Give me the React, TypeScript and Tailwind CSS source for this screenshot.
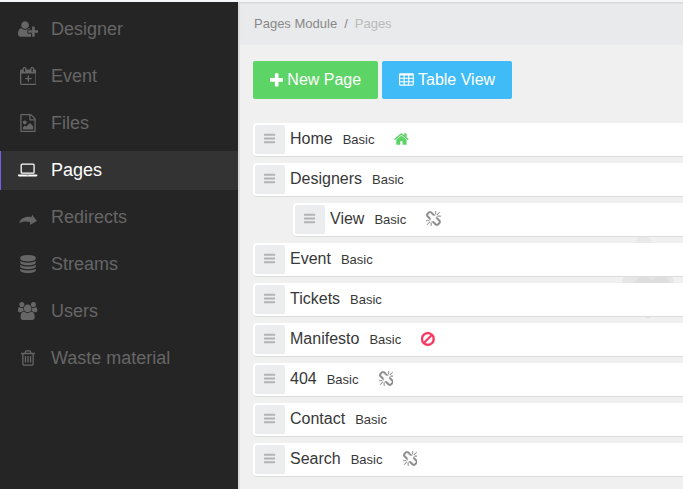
import React from 'react';

const glyphs = {
  userPlus: { w: 2048, d: 'M704 896q-159 0-271.5-112.5t-112.5-271.5 112.5-271.5 271.5-112.5 271.5 112.5 112.5 271.5-112.5 271.5-271.5 112.5zm960 128h352q13 0 22.5 9.5t9.5 22.5v192q0 13-9.5 22.5t-22.5 9.5h-352v352q0 13-9.5 22.5t-22.5 9.5h-192q-13 0-22.5-9.5t-9.5-22.5v-352h-352q-13 0-22.5-9.5t-9.5-22.5v-192q0-13 9.5-22.5t22.5-9.5h352v-352q0-13 9.5-22.5t22.5-9.5h192q13 0 22.5 9.5t9.5 22.5v352zm-736 224q0 52 38 90t90 38h256v238q-68 50-171 50h-874q-121 0-194-69t-73-190q0-53 3.5-103.5t14-109 26.5-108.5 43-97.5 62-81 85.5-53.5 111.5-20q19 0 39 17 79 61 154.5 91.5t164.5 30.5 164.5-30.5 154.5-91.5q20-17 39-17 132 0 217 96h-223q-52 0-90 38t-38 90v192z' },
  calendar: { w: 1664, d: 'M1536 256q52 0 90 38t38 90v1280q0 52-38 90t-90 38h-1408q-52 0-90-38t-38-90v-1280q0-52 38-90t90-38h128v-96q0-66 47-113t113-47h64q66 0 113 47t47 113v96h384v-96q0-66 47-113t113-47h64q66 0 113 47t47 113v96h128zm-384-96v288q0 14 9 23t23 9h64q14 0 23-9t9-23v-288q0-14-9-23t-23-9h-64q-14 0-23 9t-9 23zm-768 0v288q0 14 9 23t23 9h64q14 0 23-9t9-23v-288q0-14-9-23t-23-9h-64q-14 0-23 9t-9 23zm1152 1504v-1024h-1408v1024h1408zm-640-576h224q14 0 23 9t9 23v64q0 14-9 23t-23 9h-224v224q0 14-9 23t-23 9h-64q-14 0-23-9t-9-23v-224h-224q-14 0-23-9t-9-23v-64q0-14 9-23t23-9h224v-224q0-14 9-23t23-9h64q14 0 23 9t9 23v224z' },
  fileImage: { w: 1792, d: 'M1596 380q28 28 48 76t20 88v1152q0 40-28 68t-68 28h-1344q-40 0-68-28t-28-68v-1600q0-40 28-68t68-28h896q40 0 88 20t76 48zm-444-244v376h376q-10-29-22-41l-313-313q-12-12-41-22zm384 1528v-1024h-416q-40 0-68-28t-28-68v-416h-768v1536h1280zm-128-448v320h-1024v-192l192-192 128 128 384-384zm-832-192q-80 0-136-56t-56-136 56-136 136-56 136 56 56 136-56 136-136 56z' },
  laptop: { w: 1920, d: 'M416 1280q-66 0-113-47t-47-113v-704q0-66 47-113t113-47h1088q66 0 113 47t47 113v704q0 66-47 113t-113 47h-1088zm-32-864v704q0 13 9.500 22.500t22.500 9.500h1088q13 0 22.500-9.500t9.500-22.500v-704q0-13-9.500-22.500t-22.500-9.500h-1088q-13 0-22.500 9.500t-9.500 22.500zm1376 928h160v96q0 40-47 68t-113 28h-1600q-66 0-113-28t-47-68v-96h1760zm-720 96q16 0 16-16t-16-16h-160q-16 0-16 16t16 16h160z' },
  redirect: { w: 1792, d: 'M1300 680L1790 1290L1080 1700L1120 1400C700 1290 330 1320 20 1500C150 1000 700 800 1240 910Z' },
  database: { w: 1792, d: 'M896 768q237 0 443-43t325-127v170q0 69-103 128t-280 93.5-385 34.5-385-34.5-280-93.5-103-128v-170q119 84 325 127t443 43zm0 768q237 0 443-43t325-127v170q0 69-103 128t-280 93.5-385 34.5-385-34.5-280-93.5-103-128v-170q119 84 325 127t443 43zm0-384q237 0 443-43t325-127v170q0 69-103 128t-280 93.5-385 34.5-385-34.5-280-93.5-103-128v-170q119 84 325 127t443 43zm0-1152q208 0 385 34.5t280 93.5 103 128v128q0 69-103 128t-280 93.5-385 34.5-385-34.5-280-93.5-103-128v-128q0-69 103-128t280-93.5 385-34.5z' },
  users: { x: -64, w: 1920, d: 'M529 896q-162 5-265 128h-134q-82 0-138-40.5t-56-118.5q0-353 124-353 6 0 43.5 21t97.5 42.5 119 21.500q67 0 133-23-5 37-5 66 0 139 81 256zm1071 637q0 120-73 189.500t-194 69.500h-874q-121 0-194-69.500t-73-189.500q0-53 3.500-103.500t14-109 26.500-108.500 43-97.500 62-81 85.500-53.500 111.500-20q10 0 43 21.500t73 48 107 48 135 21.500 135-21.500 107-48 73-48 43-21.500q61 0 111.500 20t85.500 53.500 62 81 43 97.500 26.500 108.500 14 109 3.500 103.500zm-1024-1277q0 106-75 181t-181 75-181-75-75-181 75-181 181-75 181 75 75 181zm704 384q0 159-112.500 271.500t-271.500 112.500-271.500-112.500-112.500-271.500 112.500-271.500 271.500-112.500 271.500 112.500 112.500 271.500zm576 225q0 78-56 118.500t-138 40.500h-134q-103-123-265-128 81-117 81-256 0-29-5-66 66 23 133 23 59 0 119-21.500t97.500-42.500 43.500-21q124 0 124 353zm-128-609q0 106-75 181t-181 75-181-75-75-181 75-181 181-75 181 75 75 181z' },
  trash: { w: 1792, d: 'M704 736v576q0 14-9 23t-23 9h-64q-14 0-23-9t-9-23v-576q0-14 9-23t23-9h64q14 0 23 9t9 23zm256 0v576q0 14-9 23t-23 9h-64q-14 0-23-9t-9-23v-576q0-14 9-23t23-9h64q14 0 23 9t9 23zm256 0v576q0 14-9 23t-23 9h-64q-14 0-23-9t-9-23v-576q0-14 9-23t23-9h64q14 0 23 9t9 23zm128 724v-948h-896v948q0 22 7 40.5t14.5 27 10.5 8.5h832q3 0 10.5-8.5t14.5-27 7-40.5zm-672-1076h448l-48-117q-7-9-17-11h-317q-10 2-17 11zm928 32v64q0 14-9 23t-23 9h-96v948q0 83-47 143.5t-113 60.5h-832q-66 0-113-58.5t-47-141.5v-952h-96q-14 0-23-9t-9-23v-64q0-14 9-23t23-9h309l70-167q15-37 54-63t79-26h320q40 0 79 26t54 63l70 167h309q14 0 23 9t9 23z' },
  plus: { x: 192, w: 1408, d: 'M1600 736v192q0 40-28 68t-68 28h-416v416q0 40-28 68t-68 28h-192q-40 0-68-28t-28-68v-416h-416q-40 0-68-28t-28-68v-192q0-40 28-68t68-28h416v-416q0-40 28-68t68-28h192q40 0 68 28t28 68v416h416q40 0 68 28t28 68z' },
  table: { x: 64, w: 1664, d: 'M224 128h1344q160 0 160 160v1088q0 160-160 160h-1344q-160 0-160-160v-1088q0-160 160-160zM192 384v256h384v-256zM704 384v256h384v-256zM1216 384v256h384v-256zM192 768v256h384v-256zM704 768v256h384v-256zM1216 768v256h384v-256zM192 1152v224q0 32 32 32h352v-256zM704 1152v256h384v-256zM1216 1152v256h352q32 0 32-32v-224z' },
  bars: { x: 128, w: 1536, d: 'M1664 1344v128q0 26-19 45t-45 19h-1408q-26 0-45-19t-19-45v-128q0-26 19-45t45-19h1408q26 0 45 19t19 45zm0-512v128q0 26-19 45t-45 19h-1408q-26 0-45-19t-19-45v-128q0-26 19-45t45-19h1408q26 0 45 19t19 45zm0-512v128q0 26-19 45t-45 19h-1408q-26 0-45-19t-19-45v-128q0-26 19-45t45-19h1408q26 0 45 19t19 45z' },
  home: { x: 64, w: 1664, d: 'M1472 992v480q0 26-19 45t-45 19h-384v-384h-256v384h-384q-26 0-45-19t-19-45v-480q0-1 .5-3t.5-3l575-474 575 474q1 2 1 6zm223-69l-62 74q-8 9-21 11h-3q-13 0-21-7l-692-577-692 577q-12 8-24 7-13-2-21-11l-62-74q-8-10-7-23.5t11-21.5l719-599q32-26 76-26t76 26l244 204v-195q0-14 9-23t23-9h192q14 0 23 9t9 23v408l219 182q10 8 11 21.5t-7 23.5z' },
  unlink: { x: 64, w: 1664, d: 'M503 1271l-256 256q-10 9-23 9-12 0-23-9-9-10-9-23t9-23l256-256q10-9 23-9t23 9q9 10 9 23t-9 23zm169 41v320q0 14-9 23t-23 9-23-9-9-23v-320q0-14 9-23t23-9 23 9 9 23zm-224-224q0 14-9 23t-23 9h-320q-14 0-23-9t-9-23 9-23 23-9h320q14 0 23 9t9 23zm1264 128q0 120-85 203l-147 146q-83 83-203 83-121 0-204-85l-334-335q-21-21-42-56l239-18 273 274q28 28 68 27.5t68-27.5l147-146q28-28 28-67 0-40-28-68l-274-275 18-239q35 21 56 42l336 336q84 86 84 204zm-617-724l-239 18-273-274q-28-28-68-28-39 0-68 27l-147 146q-28 28-28 67 0 40 28 68l274 274-18 240q-35-21-56-42l-336-336q-84-86-84-204 0-120 85-203l147-146q83-83 203-83 121 0 204 85l334 335q21 21 42 56zm633 84q0 14-9 23t-23 9h-320q-14 0-23-9t-9-23 9-23 23-9h320q14 0 23 9t9 23zm-544-544v320q0 14-9 23t-23 9-23-9-9-23v-320q0-14 9-23t23-9 23 9 9 23zm407 151l-256 256q-11 9-23 9t-23-9q-9-10-9-23t9-23l256-256q10-9 23-9t23 9q9 10 9 23t-9 23z' },
  ban: { x: 128, w: 1536, d: 'M1440 893q0-161-87-295l-754 753q137 89 297 89 111 0 211.5-43.5t173.5-116.5 116-174.5 43-212.5zm-999 299l755-754q-135-91-300-91-148 0-273 73t-198 199-73 274q0 162 89 299zm1223-299q0 157-61 300t-163.5 246-245 164-298.5 61-298.5-61-245-164-163.5-246-61-300 61-299.5 163.5-245.5 245-164 298.5-61 298.5 61 245 164 163.5 245.5 61 299.5z' },
};

type GlyphName = keyof typeof glyphs;

function Icon({ name, className }: { name: GlyphName; className: string }) {
  const g: { x?: number; w: number; d: string } = glyphs[name];
  const bold = name === 'ban' || name === 'unlink';
  return (
    <svg aria-hidden="true" viewBox={`${g.x ?? 0} 0 ${g.w} 1792`} className={`w-auto shrink-0 fill-current ${className}`}>
      <path
        fillRule={name === 'table' ? 'evenodd' : 'nonzero'}
        stroke={bold ? 'currentColor' : 'none'}
        strokeWidth={40}
        d={g.d}
      />
    </svg>
  );
}

const menu: { label: string; icon: GlyphName }[] = [
  { label: 'Designer', icon: 'userPlus' },
  { label: 'Event', icon: 'calendar' },
  { label: 'Files', icon: 'fileImage' },
  { label: 'Pages', icon: 'laptop' },
  { label: 'Redirects', icon: 'redirect' },
  { label: 'Streams', icon: 'database' },
  { label: 'Users', icon: 'users' },
  { label: 'Waste material', icon: 'trash' },
];

type Page = { title: string; mark?: GlyphName; tone?: string; nested?: boolean };

const pages: Page[] = [
  { title: 'Home', mark: 'home', tone: 'text-[#5dd466]' },
  { title: 'Designers' },
  { title: 'View', mark: 'unlink', tone: 'text-[#8c8c8c]', nested: true },
  { title: 'Event' },
  { title: 'Tickets' },
  { title: 'Manifesto', mark: 'ban', tone: 'text-[#f9345e]' },
  { title: '404', mark: 'unlink', tone: 'text-[#8c8c8c]' },
  { title: 'Contact' },
  { title: 'Search', mark: 'unlink', tone: 'text-[#8c8c8c]' },
];

function PageRow({ page }: { page: Page }) {
  return (
    <li className={`flex h-[34px] items-center rounded-l border-b border-[#dcdddd] bg-white pl-0.5 ${page.nested ? 'ml-10' : ''}`}>
      <button type="button" aria-label={`Move ${page.title}`} className="flex h-[29px] w-[30px] items-center justify-center rounded-xs bg-[#ecedef] pb-0.5 text-[#b2b3b5]">
        <Icon name="bars" className="h-[13px]" />
      </button>
      <a href="#" className="ml-[5px] flex items-baseline text-base leading-6 text-[#383838]">
        {page.title}
        <small className="ml-2.5 text-[13px]">Basic</small>
      </a>
      {page.mark && <Icon name={page.mark} className={`mb-0.5 ml-5 h-4 ${page.tone}`} />}
    </li>
  );
}

export default function App() {
  return (
    <div className="flex min-h-screen flex-col bg-[#f0f0f0] font-['Liberation_Sans',Arial,sans-serif]">
      <div className="h-0.5 bg-[#f5f6f8]" />
      <div className="flex grow">
        <nav className="w-[238px] shrink-0 bg-[#252525] pt-2">
          <ul className="flex flex-col gap-2">
            {menu.map(({ label, icon }) => (
              <li key={label}>
                <a
                  href="#"
                  aria-current={label === 'Pages' ? 'page' : undefined}
                  className={`flex h-[39px] items-center border-l pb-0.5 text-lg ${label === 'Pages' ? 'border-[#7a5cf0] bg-[#333333] text-white' : 'border-transparent text-[#666666]'}`}
                >
                  <span className="ml-4 flex w-[22px] justify-center">
                    <Icon name={icon} className="h-[18px]" />
                  </span>
                  <span className="ml-3">{label}</span>
                </a>
              </li>
            ))}
          </ul>
        </nav>
        <main className="min-w-0 grow border-l-2 border-[#dcdcdc]">
          <nav aria-label="Breadcrumb" className="flex h-[43px] items-center gap-[7px] bg-[#e9eaec] pl-3.5 text-[13px] text-[#888888] shadow-[inset_0_2px_2px_-1px_#d0d1d3]">
            <a href="#">Pages Module</a>
            <span>/</span>
            <span className="text-[#bbbbbb]">Pages</span>
          </nav>
          <div className="relative pl-[13px] pt-4">
            <div className="flex gap-1">
              <button type="button" className="flex h-[38px] items-center gap-1 rounded-xs bg-[#5dd466] px-[17px] text-base text-white">
                <Icon name="plus" className="h-[17px]" />
                New Page
              </button>
              <button type="button" className="flex h-[38px] items-center gap-1 rounded-xs bg-[#3fbbf7] px-[17px] text-base text-white">
                <Icon name="table" className="h-4" />
                Table View
              </button>
            </div>
            <svg aria-hidden="true" viewBox="0 0 52 84" className="absolute left-[382px] top-[189px] h-[84px] w-[52px]">
              <path d="M17 0h8l5 9H13z" fill="#e9e9e9" />
              <path d="M2 42h48l2 7H0z" fill="#e6e6e6" />
              <path d="M19 42h7l4 4 6-4h8l4 7H12z" fill="#dedede" />
              <path d="M23 82h6l-3 2z" fill="#d0d0d0" />
            </svg>
            <ul className="relative mt-6 flex flex-col gap-1.5">
              {pages.map((page) => (
                <PageRow key={page.title} page={page} />
              ))}
            </ul>
          </div>
        </main>
      </div>
    </div>
  );
}
